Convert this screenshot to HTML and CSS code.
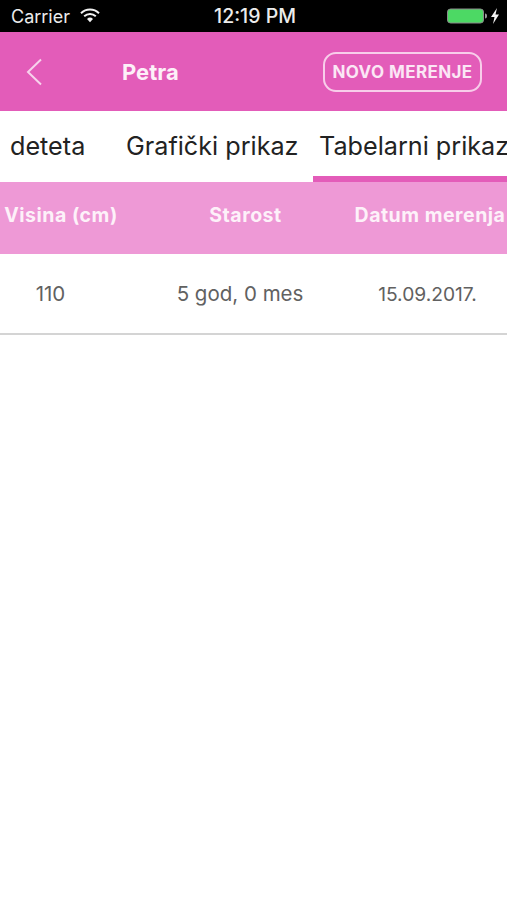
FILE: index.html
```html
<!DOCTYPE html>
<html lang="sr">
<head>
<meta charset="utf-8">
<title>Petra</title>
<link rel="stylesheet" href="styles.css">
</head>
<body>
<div class="status">
  <div class="status-left">
    <span>Carrier</span>
    <svg class="wifi" viewBox="0 0 20 15" width="20" height="15"><path d="M1 5.200a13 13 0 0 1 18 0" fill="none" stroke="#f2f2f2" stroke-width="2"/><path d="M4.200 8.300a8.500 8.500 0 0 1 11.600 0" fill="none" stroke="#f2f2f2" stroke-width="2"/><path d="M7 11a4.400 4.400 0 0 1 6 0l-3 3.200z" fill="#f2f2f2"/></svg>
  </div>
  <div class="status-time">12:19 PM</div>
  <div class="status-right">
    <svg viewBox="0 0 52 16" width="52" height="16"><rect x="0.500" y="1" width="36" height="14" rx="3" fill="#4cd964" stroke="#8a8a8a"/><path d="M38 5.500c1.500 0 2 1 2 2.500s-.5 2.500-2 2.500z" fill="#999"/><path d="M50 0 44 9h3.500l-1.500 7 6-9.500h-3.500z" fill="#f2f2f2"/></svg>
  </div>
</div>
<header class="nav">
  <svg class="back" viewBox="0 0 16 28" width="16" height="28"><path d="M15 1.500 2 14l13 12.500" fill="none" stroke="#f7d3ec" stroke-width="2"/></svg>
  <h1 class="title">Petra</h1>
  <button class="action">NOVO MERENJE</button>
</header>
<nav class="tabs">
  <div class="tab tab-first">deteta</div>
  <div class="tab tab-second">Grafički prikaz</div>
  <div class="tab tab-active">Tabelarni prikaz</div>
</nav>
<div class="thead">
  <div class="th-1">Visina (cm)</div>
  <div class="th-2">Starost</div>
  <div class="th-3">Datum merenja</div>
</div>
<div class="row">
  <div class="td-1">110</div>
  <div class="td-2">5 god, 0 mes</div>
  <div class="td-3">15.09.2017.</div>
</div>
</body>
</html>
```
FILE: styles.css
```css
* { box-sizing: border-box; }
html, body { margin: 0; padding: 0; }
body { width: 507px; height: 900px; overflow: hidden; background: #fff; font-family: Inter, "Liberation Sans", sans-serif; }
.status { height: 32px; background: #000; color: #ececec; display: flex; align-items: center; justify-content: space-between; padding: 0 8px 0 11px; font-size: 18px; }
.status-left { display: flex; align-items: center; gap: 10px; width: 120px; }
.status-time { font-weight: 500; font-size: 19.500px; }
.status-right { width: 120px; display: flex; justify-content: flex-end; }
.wifi { margin-top: -1px; }
.nav { height: 79px; background: #e35cb9; display: flex; align-items: center; color: #fff; padding: 0 25px 0 26px; }
.back { flex: none; margin-right: 80px; }
.title { margin: 0; font-size: 22px; font-weight: 700; flex: 1; color: #fdf0f8; }
.action { width: 159px; height: 40px; border: 2px solid #f8cdea; border-radius: 13px; background: transparent; color: #fbe7f5; font: 700 17px Inter, "Liberation Sans", sans-serif; padding: 0; white-space: nowrap; letter-spacing: .4px; }
.tabs { height: 71px; display: flex; overflow: hidden; font-size: 25.200px; color: #222; white-space: nowrap; }
.tab { height: 71px; padding-top: 19px; line-height: 32px; flex: none; }
.tab-first { width: 116px; padding-left: 10px; }
.tab-second { width: 197px; padding-left: 10px; }
.tab-active { width: 194px; padding-left: 6px; border-bottom: 6px solid #e35cb9; }
.thead { height: 72px; background: #ee99d6; display: flex; align-items: center; color: #fdf1f9; font-weight: 700; font-size: 19.500px; letter-spacing: .5px; white-space: nowrap; text-align: center; padding-bottom: 6px; }
.th-1 { flex: none; width: 122px; }
.th-2 { flex: none; width: 231px; padding-left: 16px; }
.th-3 { flex: none; width: 154px; }
.row { height: 81px; display: flex; align-items: center; color: #616161; font-size: 20.500px; border-bottom: 2px solid #d4d4d4; white-space: nowrap; text-align: center; }
.td-1 { flex: none; width: 101px; }
.td-2 { flex: none; width: 238px; margin-left: 20px; }
.td-3 { flex: none; width: 137px; font-size: 19.200px; }
```
